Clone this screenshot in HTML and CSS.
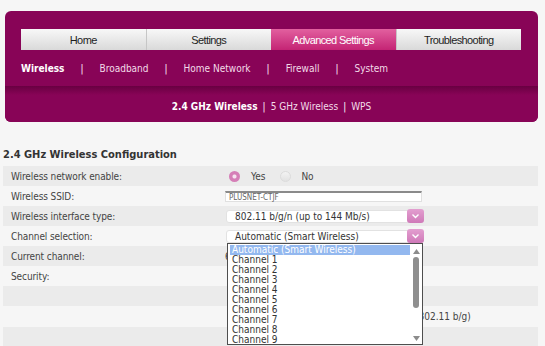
FILE: index.html
```html
<!DOCTYPE html>
<html lang="en">
<head>
    <meta charset="UTF-8">
    <title>Wireless Configuration</title>
    <link rel="stylesheet" href="styles.css">
</head>
<body>
    <div class="panel">
        <ul class="tabs">
            <li>Home</li>
            <li>Settings</li>
            <li class="active">Advanced Settings</li>
            <li>Troubleshooting</li>
        </ul>
        <div class="subnav">
            <span class="current">Wireless</span><span class="sep">|</span>
            <span>Broadband</span><span class="sep">|</span>
            <span>Home Network</span><span class="sep">|</span>
            <span>Firewall</span><span class="sep">|</span>
            <span>System</span>
        </div>
        <div class="subsub">
            <span class="current">2.4 GHz Wireless</span><span class="sep">|</span>
            <span>5 GHz Wireless</span><span class="sep">|</span>
            <span>WPS</span>
        </div>
    </div>

    <div class="content">
        <h2>2.4 GHz Wireless Configuration</h2>
        <div class="form">
            <div class="row">
                <div class="label">Wireless network enable:</div>
                <div class="value">
                    <span class="radio on"></span><span class="radio-text">Yes</span>
                    <span class="radio off"></span><span class="radio-text">No</span>
                </div>
            </div>
            <div class="row">
                <div class="label">Wireless SSID:</div>
                <div class="value"><div class="textbox">PLUSNET-CTJF</div></div>
            </div>
            <div class="row">
                <div class="label">Wireless interface type:</div>
                <div class="value">
                    <div class="select">
                        <span class="select-text">802.11 b/g/n (up to 144 Mb/s)</span>
                        <span class="select-btn"><svg width="9" height="6" viewBox="0 0 9 6"><polyline points="1.5,1.5 4.5,4.5 7.5,1.5" fill="none" stroke="#fff" stroke-width="1.4"/></svg></span>
                    </div>
                </div>
            </div>
            <div class="row">
                <div class="label">Channel selection:</div>
                <div class="value">
                    <div class="select">
                        <span class="select-text">Automatic (Smart Wireless)</span>
                        <span class="select-btn"><svg width="9" height="6" viewBox="0 0 9 6"><polyline points="1.5,1.5 4.5,4.5 7.5,1.5" fill="none" stroke="#fff" stroke-width="1.4"/></svg></span>
                    </div>
                    <!-- open dropdown list -->
                    <div class="dropdown">
                        <ul class="options">
                            <li class="selected">Automatic (Smart Wireless)</li>
                            <li>Channel 1</li>
                            <li>Channel 2</li>
                            <li>Channel 3</li>
                            <li>Channel 4</li>
                            <li>Channel 5</li>
                            <li>Channel 6</li>
                            <li>Channel 7</li>
                            <li>Channel 8</li>
                            <li>Channel 9</li>
                        </ul>
                        <div class="scrollbar">
                            <svg width="7" height="5" viewBox="0 0 7 5"><polygon points="0,5 3.5,0 7,5" fill="#8c8c8c"/></svg>
                            <div class="thumb"></div>
                            <svg width="7" height="5" viewBox="0 0 7 5"><polygon points="0,0 3.5,5 7,0" fill="#8c8c8c"/></svg>
                        </div>
                    </div>
                </div>
            </div>
            <div class="row">
                <div class="label">Current channel:</div>
                <div class="value">6</div>
            </div>
            <div class="row">
                <div class="label">Security:</div>
                <div class="value"></div>
            </div>
            <div class="row">
                <div class="label"></div>
                <div class="value"></div>
            </div>
            <div class="row tall">
                <div class="label"></div>
                <div class="value"><span class="mode-note">(802.11 b/g)</span></div>
            </div>
            <div class="row">
                <div class="label"></div>
                <div class="value"></div>
            </div>
        </div>
    </div>
</body>
</html>
```

FILE: styles.css
```css
html, body {
    margin: 0;
    background-color: #f6f6f6;
    font-family: "DejaVu Sans", Verdana, sans-serif;
    font-stretch: condensed;
    font-size: 10px;
    color: #444;
}
.panel {
    margin: 11px 7px 0 5px;
    height: 111px;
    background-color: #880457;
    border-radius: 6px;
    display: flex;
    flex-direction: column;
}
.tabs {
    display: flex;
    list-style: none;
    margin: 18px 0 0 16px;
    padding: 0;
    width: 500px;
    height: 21px;
}
.tabs li {
    flex: 1;
    display: flex;
    align-items: center;
    justify-content: center;
    background: linear-gradient(#f8f8f8, #d9d9d9);
    border-left: 1px solid #c6c6c6;
    font-family: "Liberation Sans", Arial, sans-serif;
    font-stretch: normal;
    font-size: 11px;
    letter-spacing: -0.6px;
    color: #1e1e1e;
}
.tabs li:first-child {
    border-left: 0;
}
.tabs li.active {
    background: linear-gradient(#e2609f, #c42474);
    border-left: 0;
    color: #fff;
}
.subnav {
    height: 36px;
    display: flex;
    align-items: center;
    column-gap: 16px;
    padding-left: 16px;
    color: #f3dbe8;
}
.subnav .current, .subsub .current {
    font-weight: bold;
    color: #fff;
}
.subsub {
    flex: 1;
    display: flex;
    align-items: center;
    justify-content: center;
    column-gap: 5px;
    padding-top: 5px;
    color: #f3dbe8;
    background: linear-gradient(#690041, #880457 9px);
    border-radius: 0 0 6px 6px;
}
.sep {
    color: #fff;
}
.content {
    margin: 0 7px 0 3px;
}
.content h2 {
    margin: 26px 0 4px 0;
    font-size: 11px;
    line-height: 14px;
    color: #333;
}
.row {
    display: flex;
    align-items: center;
    height: 20px;
    background-color: #f6f6f6;
}
.row:nth-child(odd) {
    background-color: #ebebeb;
}
.row.tall {
    height: 21px;
}
.label {
    width: 214px;
    padding-left: 8px;
    letter-spacing: -0.1px;
}
.value {
    flex: 1;
    display: flex;
    align-items: center;
    position: relative;
    height: 100%;
}
.radio {
    width: 11px;
    height: 11px;
    border-radius: 50%;
    box-sizing: border-box;
}
.radio.on {
    margin-left: 4px;
    background: radial-gradient(#f6e3ef 0 1.5px, #d57fb7 2.5px);
}
.radio.off {
    margin-left: 15px;
    background: linear-gradient(#f3f3f3, #e2e2e2);
    border: 1px solid #dcdcdc;
}
.radio-text {
    margin-left: 11px;
}
.radio.off + .radio-text {
    margin-left: 10px;
}
.textbox {
    width: 197px;
    height: 11px;
    box-sizing: border-box;
    background-color: #fff;
    border: 1px solid #e0e0e0;
    border-top: 2px solid #8a8a8a;
    font-size: 8px;
    line-height: 9px;
    padding-left: 3px;
    color: #666;
}
.select {
    margin-left: 1px;
    width: 198px;
    height: 13px;
    display: flex;
    align-items: center;
    background-color: #fff;
    border: 1px solid #e2e2e2;
    border-radius: 3px;
    box-sizing: border-box;
}
.select-text {
    flex: 1;
    padding-left: 8px;
    color: #333;
}
.select-btn {
    width: 17px;
    height: 14px;
    margin-right: -1px;
    display: flex;
    align-items: center;
    justify-content: center;
    background: linear-gradient(#e39fd0, #cf79b8);
    border-radius: 3px;
}
.dropdown {
    position: absolute;
    top: 17px;
    left: 2px;
    z-index: 2;
    width: 196px;
    height: 102px;
    box-sizing: border-box;
    border: 1px solid #4e4e4e;
    background-color: #fff;
    display: flex;
}
.options {
    flex: 1;
    list-style: none;
    margin: 0;
    padding: 1px 0 0 2px;
}
.options li {
    height: 10px;
    line-height: 10px;
    padding-left: 2px;
    color: #333;
}
.options li.selected {
    background-color: #93b8ef;
    color: #fff;
}
.scrollbar {
    width: 12px;
    display: flex;
    flex-direction: column;
    align-items: center;
    padding: 5px 0 3px 0;
}
.thumb {
    width: 6px;
    height: 51px;
    margin: 3px 0 auto 0;
    border-radius: 3px;
    background-color: #8f8f8f;
}
.mode-note {
    margin-left: 190px;
}
```
